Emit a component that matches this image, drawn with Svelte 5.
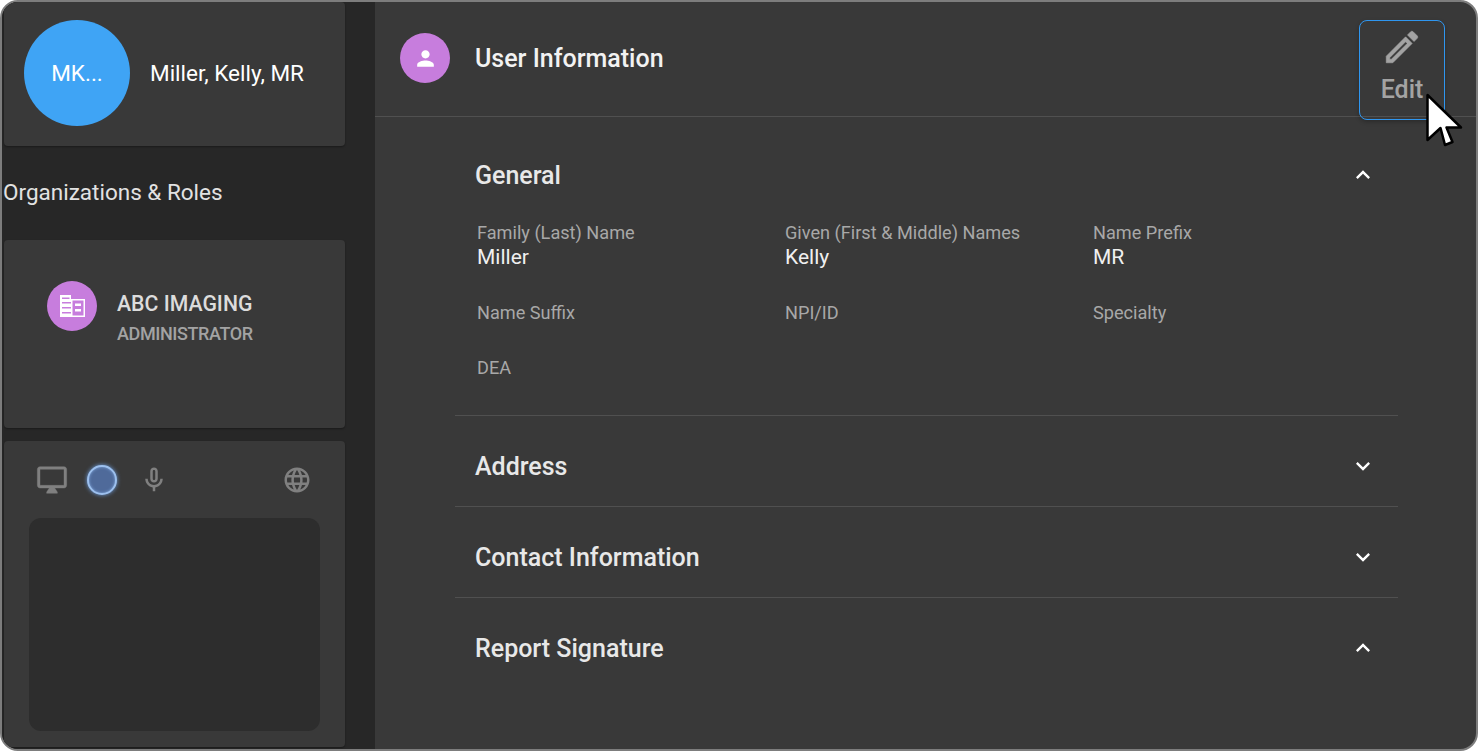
<script>
  const fields = [
    { label: "Family (Last) Name", value: "Miller" },
    { label: "Given (First & Middle) Names", value: "Kelly" },
    { label: "Name Prefix", value: "MR" },
    { label: "Name Suffix", value: "" },
    { label: "NPI/ID", value: "" },
    { label: "Specialty", value: "" },
    { label: "DEA", value: "" }
  ];
</script>

<div class="frame">
  <aside class="sidebar">
    <div class="card profile">
      <div class="avatar">MK...</div>
      <div class="profile-name">Miller, Kelly, MR</div>
    </div>

    <div class="orgs-title">Organizations &amp; Roles</div>

    <div class="card org">
      <div class="badge">
        <svg width="25" height="22" viewBox="0 0 25 22">
          <path fill="#fff" d="M0 0h11v4h14v18H0z"/>
          <path fill="#c77ddd" d="M2 2.500h7.500v1.500H2zM2 7h9v1.500H2zM2 12h9v1.500H2zM2 17h9v1.500H2zM12.500 5.500h11v15h-11z"/>
          <path fill="#fff" d="M15 8.500h6v2.500h-6zM15 14h6v2.500h-6z"/>
        </svg>
      </div>
      <div class="org-text">
        <div class="org-name">ABC IMAGING</div>
        <div class="org-role">ADMINISTRATOR</div>
      </div>
    </div>

    <div class="card media">
      <div class="media-icons">
        <svg class="monitor" width="32" height="32" viewBox="0 0 24 24" fill="#808080" stroke="#808080" stroke-width="0.3"><path d="M21 2H3c-1.100 0-2 .9-2 2v12c0 1.100.9 2 2 2h7l-2 3v1h8v-1l-2-3h7c1.100 0 2-.9 2-2V4c0-1.100-.9-2-2-2zm0 14H3V4h18v12z"/></svg>
        <div class="record-dot"></div>
        <svg class="mic" width="30" height="30" viewBox="0 0 24 24" fill="#808080"><path d="M12 14c1.660 0 3-1.340 3-3V5c0-1.660-1.340-3-3-3S9 3.340 9 5v6c0 1.660 1.340 3 3 3zm-1-9c0-.55.45-1 1-1s1 .45 1 1v6c0 .55-.45 1-1 1s-1-.45-1-1V5zm6 6c0 2.760-2.240 5-5 5s-5-2.240-5-5H5c0 3.530 2.610 6.430 6 6.920V21h2v-3.080c3.390-.49 6-3.390 6-6.920h-2z"/></svg>
        <svg class="globe" width="30" height="30" viewBox="0 0 24 24" fill="#808080"><path d="M11.990 2C6.470 2 2 6.480 2 12s4.470 10 9.990 10C17.520 22 22 17.520 22 12S17.520 2 11.990 2zm6.930 6h-2.950c-.32-1.250-.78-2.450-1.380-3.560 1.840.63 3.370 1.910 4.330 3.560zM12 4.040c.83 1.200 1.480 2.530 1.910 3.960h-3.820c.43-1.430 1.080-2.760 1.910-3.960zM4.260 14C4.100 13.360 4 12.690 4 12s.1-1.360.26-2h3.380c-.08.66-.14 1.320-.14 2s.06 1.340.14 2H4.260zm.82 2h2.950c.32 1.250.78 2.450 1.380 3.560-1.840-.63-3.370-1.900-4.330-3.560zm2.950-8H5.080c.96-1.660 2.490-2.930 4.330-3.560C8.810 5.550 8.350 6.750 8.030 8zM12 19.960c-.83-1.200-1.480-2.530-1.910-3.960h3.820c-.43 1.430-1.080 2.760-1.910 3.960zM14.340 14H9.660c-.09-.66-.16-1.320-.16-2s.07-1.350.16-2h4.680c.09.65.16 1.320.16 2s-.07 1.340-.16 2zm.25 5.560c.6-1.110 1.060-2.310 1.380-3.560h2.950c-.96 1.650-2.490 2.930-4.330 3.560zM16.360 14c.08-.66.14-1.320.14-2s-.06-1.340-.14-2h3.380c.16.640.26 1.310.26 2s-.1 1.360-.26 2h-3.380z"/></svg>
      </div>
      <div class="preview"></div>
    </div>
  </aside>

  <main class="content">
    <header class="topbar">
      <div class="badge">
        <svg width="25" height="25" viewBox="0 0 24 24" fill="#fff"><path d="M12 12c2.210 0 4-1.790 4-4s-1.790-4-4-4-4 1.790-4 4 1.790 4 4 4zm0 2c-2.670 0-8 1.340-8 4v2h16v-2c0-2.660-5.330-4-8-4z"/></svg>
      </div>
      <h1>User Information</h1>
      <button class="edit">
        <svg width="42" height="42" viewBox="0 0 24 24" fill="#a3a3a3" stroke="#a3a3a3" stroke-width="0.35"><path d="M3 17.250V21h3.750L17.810 9.940l-3.750-3.750L3 17.250zM5.920 19H5v-.92l9.060-9.060.92.92L5.920 19zM20.710 7.040a.996.996 0 0 0 0-1.410l-2.340-2.340a1.004 1.004 0 0 0-1.410 0l-1.830 1.830 3.750 3.750 1.830-1.830z"/></svg>
        <span>Edit</span>
      </button>
    </header>

    <div class="sections">
      <section class="section general">
        <div class="section-head">
          <h2>General</h2>
          <svg width="28" height="28" viewBox="0 0 24 24" fill="#fff"><path d="M7.410 15.410 12 10.830l4.590 4.580L18 14l-6-6-6 6z"/></svg>
        </div>
        <div class="fields">
          {#each fields as f}
            <div class="field">
              <div class="field-label">{f.label}</div>
              {#if f.value}<div class="field-value">{f.value}</div>{/if}
            </div>
          {/each}
        </div>
      </section>

      <section class="section">
        <div class="section-head">
          <h2>Address</h2>
          <svg width="28" height="28" viewBox="0 0 24 24" fill="#fff"><path d="M7.410 8.590 12 13.170l4.590-4.580L18 10l-6 6-6-6z"/></svg>
        </div>
      </section>

      <section class="section">
        <div class="section-head">
          <h2>Contact Information</h2>
          <svg width="28" height="28" viewBox="0 0 24 24" fill="#fff"><path d="M7.410 8.590 12 13.170l4.590-4.580L18 10l-6 6-6-6z"/></svg>
        </div>
      </section>

      <section class="section last">
        <div class="section-head">
          <h2>Report Signature</h2>
          <svg width="28" height="28" viewBox="0 0 24 24" fill="#fff"><path d="M7.410 15.410 12 10.830l4.590 4.580L18 14l-6-6-6 6z"/></svg>
        </div>
      </section>
    </div>
  </main>

  <!-- mouse pointer captured in the screenshot -->
  <svg class="cursor" width="40" height="58" viewBox="0 0 40 58">
    <path d="M3.500 3 L3.500 48 L16.500 36 L21 53 L28.500 50 L22.500 35.500 L37 35.500 Z" fill="#fff" stroke="#000" stroke-width="2.500" stroke-linejoin="round"/>
  </svg>
</div>

<style>
  :global(body) {
    margin: 0;
    background: #fff;
    font-family: Roboto, "Liberation Sans", sans-serif;
  }

  .frame {
    position: relative;
    box-sizing: border-box;
    width: 1478px;
    height: 751px;
    border: 2px solid #7d7d7d;
    border-radius: 18px;
    overflow: hidden;
    display: flex;
    background: #393939;
  }

  .sidebar {
    flex: 0 0 373px;
    box-sizing: border-box;
    padding: 0 30px 0 2px;
    background: #272727;
    display: flex;
    flex-direction: column;
  }

  .card {
    background: #393939;
    border-radius: 4px;
    box-shadow: 0 1px 2px rgba(0, 0, 0, 0.35);
  }

  .profile {
    height: 144px;
    flex: none;
    display: flex;
    align-items: flex-start;
    box-sizing: border-box;
    padding: 18px 0 0 20px;
    gap: 20px;
  }

  .avatar {
    width: 106px;
    height: 106px;
    border-radius: 50%;
    background: #3fa4f5;
    color: #fff;
    font-size: 22.500px;
    display: flex;
    align-items: center;
    justify-content: center;
  }

  .profile-name {
    color: #fff;
    font-size: 22.500px;
    line-height: 106px;
  }

  .orgs-title {
    color: #e2e2e2;
    font-size: 22.500px;
    line-height: 28px;
    margin: 32px 0 34px -1px;
    flex: none;
  }

  .org {
    height: 188px;
    flex: none;
    box-sizing: border-box;
    padding: 41px 0 0 43px;
    display: flex;
    gap: 20px;
  }

  .badge {
    width: 50px;
    height: 50px;
    flex: none;
    border-radius: 50%;
    background: #c77ddd;
    display: flex;
    align-items: center;
    justify-content: center;
  }

  .org-name {
    color: #dcdcdc;
    font-size: 21.250px;
    font-weight: 500;
    line-height: 24px;
    margin-top: 11px;
  }

  .org-role {
    color: #a3a3a3;
    font-size: 18px;
    font-weight: 500;
    line-height: 22px;
    margin-top: 7px;
    letter-spacing: -0.4px;
  }

  .media {
    height: 306px;
    flex: none;
    margin-top: 13px;
    box-sizing: border-box;
    padding: 0 25px;
  }

  .media-icons {
    height: 77px;
    display: flex;
    align-items: center;
    padding-top: 1px;
    box-sizing: border-box;
  }

  .monitor {
    margin-left: 6.500px;
  }

  .record-dot {
    width: 26px;
    height: 26px;
    margin-left: 19.500px;
    border-radius: 50%;
    background: #4f6a9a;
    border: 2px solid #9dc0ee;
    box-shadow: 0 0 4px #6f9fe0, inset 0 0 3px #7fa6dc;
  }

  .mic {
    margin-left: 22px;
  }

  .globe {
    margin-left: auto;
    margin-right: 8.500px;
  }

  .preview {
    height: 213px;
    background: #2d2d2d;
    border-radius: 12px;
  }

  .content {
    flex: 1;
    min-width: 0;
  }

  .topbar {
    height: 115px;
    box-sizing: border-box;
    border-bottom: 1px solid #505050;
    padding: 31px 31px 0 25px;
    display: flex;
    align-items: flex-start;
  }

  h1 {
    margin: 0 0 0 25px;
    color: #f2f2f2;
    font-size: 25px;
    font-weight: 500;
    line-height: 52px;
  }

  .edit {
    margin: -13px 0 0 auto;
    width: 86px;
    height: 100px;
    box-sizing: border-box;
    background: transparent;
    border: 1px solid #2f96ef;
    border-radius: 8px;
    box-shadow: 0 2px 4px rgba(0, 0, 0, 0.25);
    padding: 5px 0 0;
    display: flex;
    flex-direction: column;
    align-items: center;
    font-family: inherit;
    color: #a3a3a3;
  }

  .edit span {
    font-size: 25px;
    font-weight: 500;
    line-height: 28px;
    margin-top: 8px;
  }

  .sections {
    margin: 0 78px 0 80px;
    padding-top: 26px;
  }

  .section {
    border-bottom: 1px solid #505050;
  }

  .section.last {
    border-bottom: none;
  }

  .section-head {
    height: 90px;
    box-sizing: border-box;
    padding: 10px 21px 0 20px;
    display: flex;
    align-items: center;
    justify-content: space-between;
  }

  .general .section-head {
    height: 64px;
    padding-top: 0;
  }

  h2 {
    margin: 0;
    color: #e8e8e8;
    font-size: 25px;
    font-weight: 500;
  }

  .fields {
    display: grid;
    grid-template-columns: repeat(3, 308px);
    row-gap: 31px;
    padding: 14px 0 35px 22px;
  }

  .field-label {
    color: #a8a8a8;
    font-size: 18.150px;
    line-height: 24px;
  }

  .field-value {
    color: #f0f0f0;
    font-size: 21px;
    line-height: 25px;
  }

  .cursor {
    position: absolute;
    left: 1422px;
    top: 90px;
  }
</style>
